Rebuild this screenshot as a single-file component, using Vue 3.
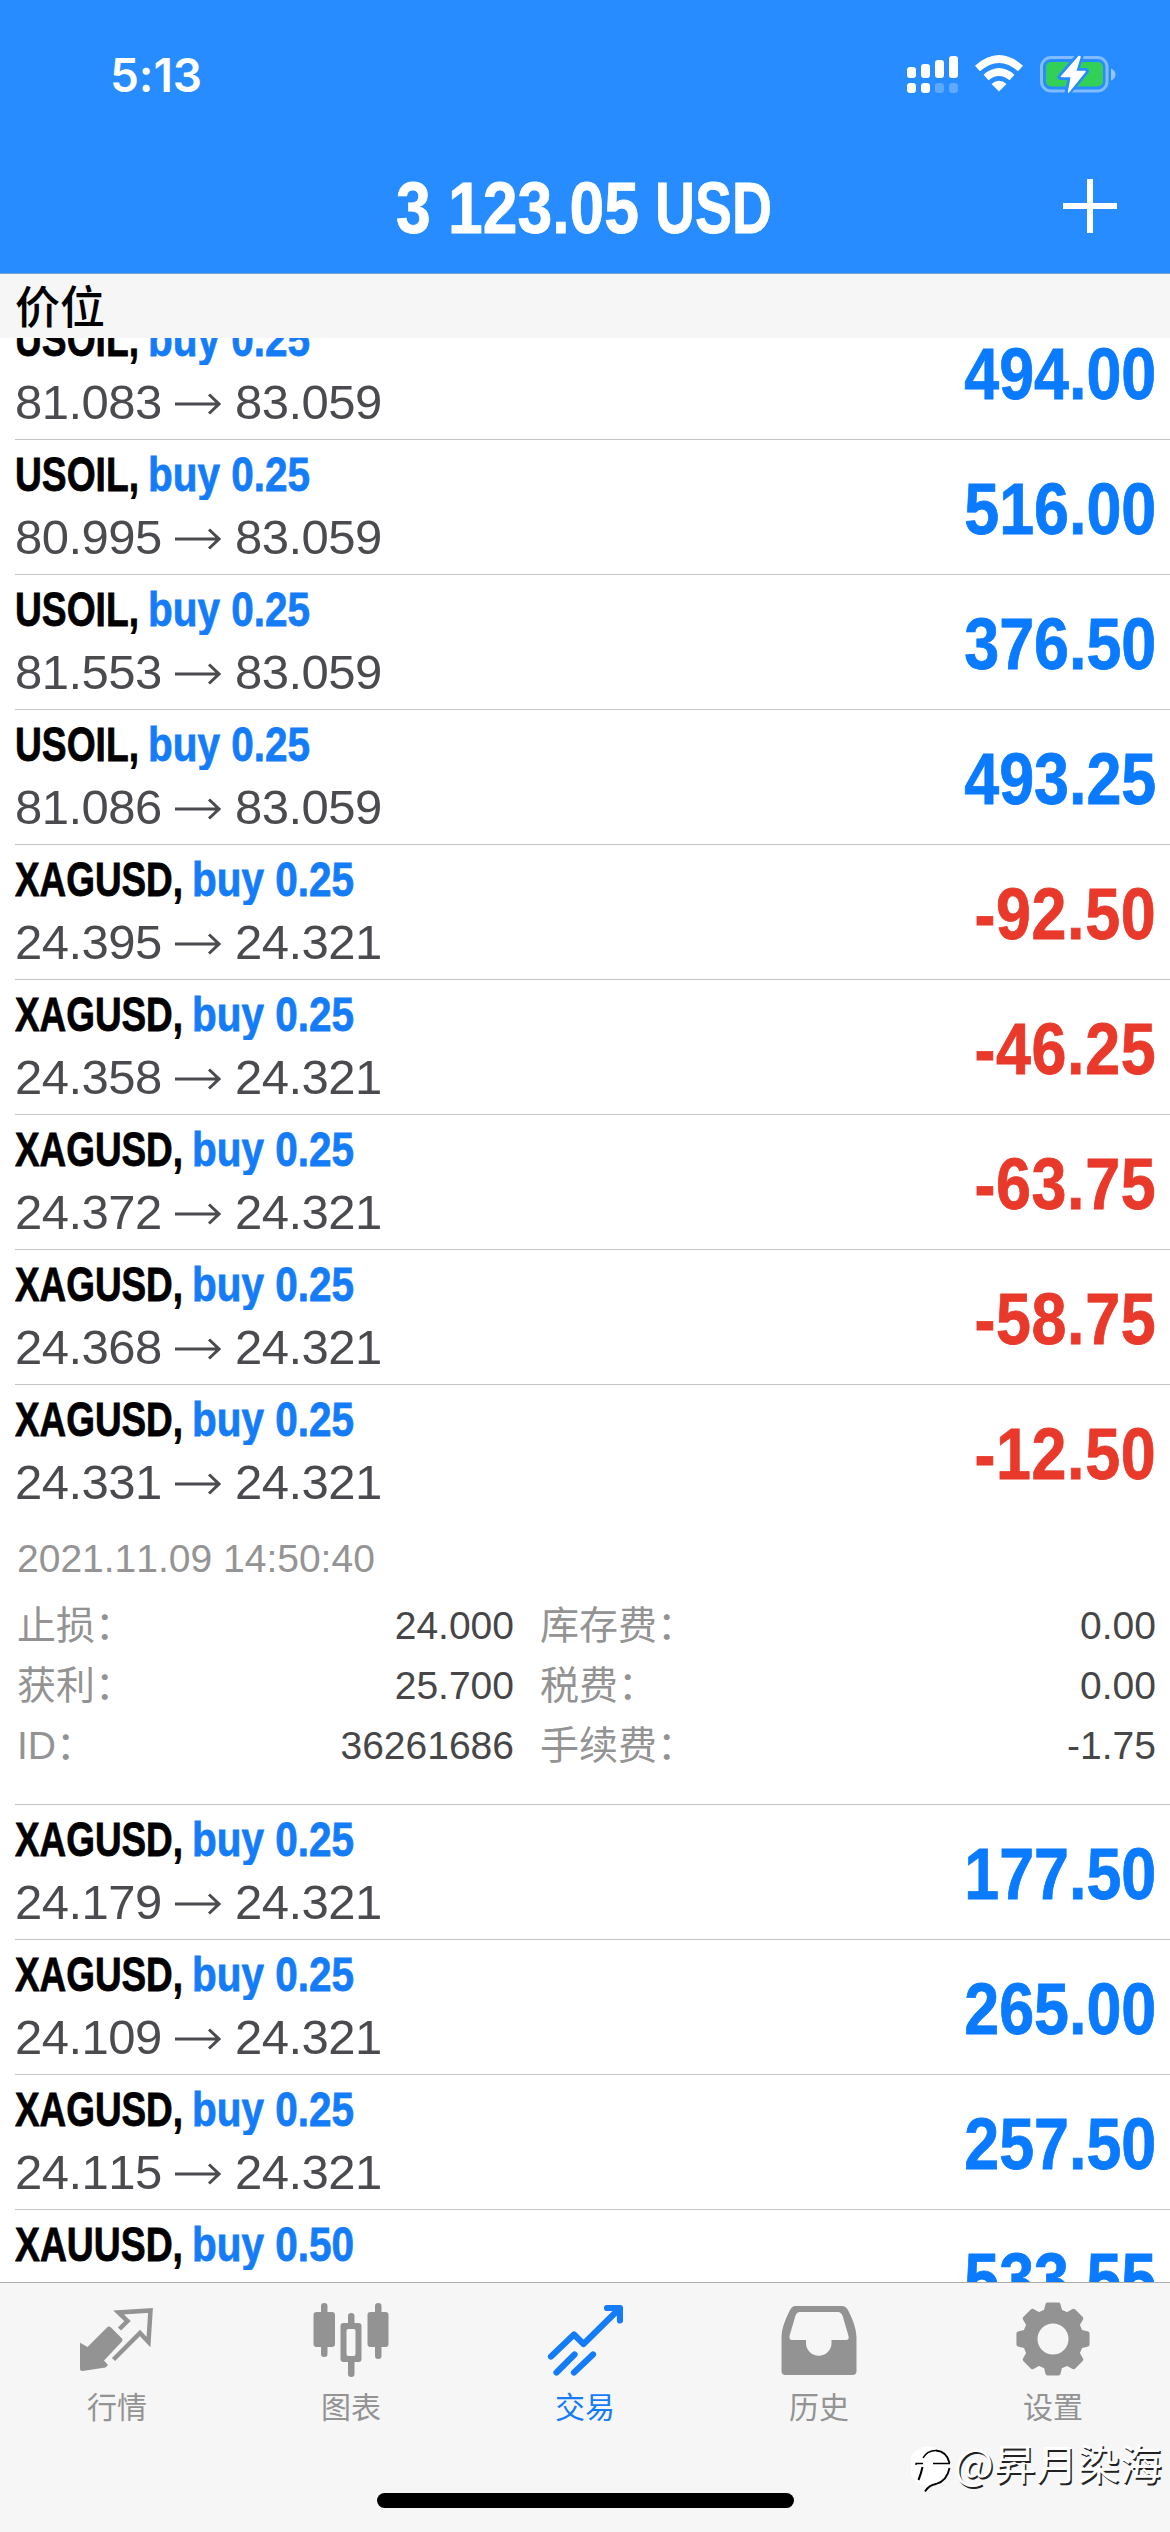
<script setup>
const rows = [
  { symbol: 'USOIL', lots: '0.25', from: '81.083', to: '83.059', profit: '494.00' },
  { symbol: 'USOIL', lots: '0.25', from: '80.995', to: '83.059', profit: '516.00' },
  { symbol: 'USOIL', lots: '0.25', from: '81.553', to: '83.059', profit: '376.50' },
  { symbol: 'USOIL', lots: '0.25', from: '81.086', to: '83.059', profit: '493.25' },
  { symbol: 'XAGUSD', lots: '0.25', from: '24.395', to: '24.321', profit: '-92.50' },
  { symbol: 'XAGUSD', lots: '0.25', from: '24.358', to: '24.321', profit: '-46.25' },
  { symbol: 'XAGUSD', lots: '0.25', from: '24.372', to: '24.321', profit: '-63.75' },
  { symbol: 'XAGUSD', lots: '0.25', from: '24.368', to: '24.321', profit: '-58.75' },
  { symbol: 'XAGUSD', lots: '0.25', from: '24.331', to: '24.321', profit: '-12.50', open: true },
  { symbol: 'XAGUSD', lots: '0.25', from: '24.179', to: '24.321', profit: '177.50' },
  { symbol: 'XAGUSD', lots: '0.25', from: '24.109', to: '24.321', profit: '265.00' },
  { symbol: 'XAGUSD', lots: '0.25', from: '24.115', to: '24.321', profit: '257.50' },
  { symbol: 'XAUUSD', lots: '0.50', profit: '533.55' },
]

const details = [
  ['止损：', '24.000', '库存费：', '0.00'],
  ['获利：', '25.700', '税费：', '0.00'],
  ['ID：', '36261686', '手续费：', '-1.75'],
]

// Condensed advance widths of the symbol labels, comma included
const symbolWidths = { USOIL: 124, XAGUSD: 168, XAUUSD: 168 }

const tabs = [
  { id: 'quotes', label: '行情' },
  { id: 'chart', label: '图表' },
  { id: 'trade', label: '交易', active: true },
  { id: 'history', label: '历史' },
  { id: 'settings', label: '设置' },
]

// Eight-toothed gear outline
const gear = (() => {
  const pts = []
  for (let i = 0; i < 8; i++) {
    const profile = [[-15, 28.5], [-9, 35], [9, 35], [15, 28.5]]
    for (const [deg, r] of profile) {
      const a = ((i * 45 + deg - 90) * Math.PI) / 180
      pts.push(`${(38 + r * Math.cos(a)).toFixed(2)} ${(38 + r * Math.sin(a)).toFixed(2)}`)
    }
  }
  return `M${pts.join('L')}ZM55.5 38a17.5 17.5 0 1 0-35 0a17.5 17.5 0 1 0 35 0Z`
})()
</script>

<template>
  <div class="screen">
    <header class="top">
      <div class="status">
        <span class="time">5:13</span>
        <svg class="status-icons" width="212" height="44" viewBox="904 52 212 44">
          <g fill="#fff">
            <rect x="907" y="67" width="9" height="11" rx="3" />
            <rect x="921" y="64" width="9" height="14" rx="3" />
            <rect x="935" y="60" width="9" height="18" rx="3" />
            <rect x="949" y="56" width="9" height="22" rx="3" />
            <rect x="907" y="83" width="9" height="10" rx="3" />
            <rect x="921" y="83" width="9" height="10" rx="3" />
            <rect x="935" y="83" width="9" height="10" rx="3" opacity=".25" />
            <rect x="949" y="83" width="9" height="10" rx="3" opacity=".25" />
            <path d="M999 91.500L991.500 84Q999 77.500 1006.500 84Z" />
          </g>
          <g fill="none" stroke="#fff" stroke-width="7.500">
            <path d="M977.500 68.500Q999 49.500 1020.500 68.500" />
            <path d="M986 77.500Q999 66.500 1012 77.500" />
          </g>
          <rect x="1041.500" y="57.500" width="65.500" height="33.500" rx="9.500" fill="none" stroke="#fff" stroke-opacity=".42" stroke-width="3" />
          <path d="M1111 68.500q4.500 2 4.500 6t-4.500 6z" fill="#fff" opacity=".5" />
          <rect x="1046" y="62" width="57" height="24.500" rx="5" fill="#33d058" />
          <path d="M1079 55.500L1060.500 77H1071L1067.500 93L1086 71H1075.500L1080.500 56.500Z" fill="#fff" stroke="#268cff" stroke-width="6" stroke-linejoin="round" />
          <path d="M1079 56.500L1061.500 76.500H1071.500L1068.500 92L1085 71.500H1075.500L1080 57Z" fill="#fff" stroke="#fff" stroke-width="1.500" stroke-linejoin="round" />
        </svg>
      </div>
      <div class="nav">
        <svg class="balance" width="400" height="90" viewBox="385 160 400 90">
          <text x="396" y="233" textLength="243" lengthAdjust="spacingAndGlyphs">3 123.05</text>
          <text x="655" y="233" textLength="117" lengthAdjust="spacingAndGlyphs">USD</text>
        </svg>
        <svg class="add" width="54" height="54" viewBox="0 0 54 54"><path d="M27 0V54M0 27H54" stroke="#fff" stroke-width="6" /></svg>
      </div>
    </header>

    <div class="section">价位</div>

    <main class="list">
      <div class="track">
        <div v-for="(row, i) in rows" :key="i" class="position">
          <div class="row">
            <div class="info">
              <svg class="name" width="400" height="60">
                <text x="0" y="50.500" :textLength="symbolWidths[row.symbol]" lengthAdjust="spacingAndGlyphs">{{ row.symbol }},</text>
                <text class="side" :x="symbolWidths[row.symbol] + 9" y="50.500" textLength="162" lengthAdjust="spacingAndGlyphs">buy {{ row.lots }}</text>
              </svg>
              <div v-if="row.from" class="prices">
                <span>{{ row.from }}</span>
                <svg class="arrow" width="46" height="22" viewBox="0 0 46 22"><path d="M0 11H44M34 1.500L44 11L34 20.500" fill="none" stroke="#4b4b4f" stroke-width="3" /></svg>
                <span>{{ row.to }}</span>
              </div>
            </div>
            <div class="profit" :class="{ loss: row.profit.startsWith('-') }">{{ row.profit }}</div>
          </div>
          <div v-if="row.open" class="details">
            <div class="date">2021.11.09 14:50:40</div>
            <div v-for="d in details" :key="d[0]" class="detail">
              <span class="label">{{ d[0] }}</span>
              <span class="val">{{ d[1] }}</span>
              <span class="label">{{ d[2] }}</span>
              <span class="val">{{ d[3] }}</span>
            </div>
          </div>
        </div>
      </div>
    </main>

    <footer class="tabbar">
      <div class="tabs">
        <div v-for="tab in tabs" :key="tab.id" class="tab" :class="{ active: tab.active }">
          <svg width="76" height="76" viewBox="0 0 76 76" fill="currentColor">
            <g v-if="tab.id === 'quotes'">
              <path d="M1.500 42L8.500 46L28 26.500Q30 24.500 32 26.500L42.500 37Q44.500 39 42.500 41L25 59.500L29 64L26.500 66.500L3.500 70Q1 70 1 67.500V41.500Z" />
              <path d="M40.500 28L48.500 20L39.500 11.500L71.500 9.500L69.500 41L61 32L34.500 58.500" fill="none" stroke="currentColor" stroke-width="4.500" />
            </g>
            <g v-else-if="tab.id === 'chart'">
              <rect x="8" y="2" width="6.500" height="54" rx="3.200" />
              <rect x="0.500" y="11" width="21.500" height="35" rx="3" />
              <rect x="62" y="2" width="6.500" height="56" rx="3.200" />
              <rect x="54.500" y="11" width="21" height="35" rx="3" />
              <rect x="35" y="12" width="6.500" height="64" rx="3.200" />
              <rect x="27.500" y="22" width="21" height="39" rx="3" />
              <rect x="33.500" y="28" width="9" height="27" rx="2" fill="#f6f6f6" />
            </g>
            <g v-else-if="tab.id === 'trade'" fill="none" stroke="currentColor" stroke-width="6.200" stroke-linecap="round" stroke-linejoin="round">
              <path d="M4 55.500L27 33.500L36.500 43L72 8M60 7H73V19.500" />
              <path d="M9.500 71.500L27.500 53.500M27 71.500L46 53.500" />
            </g>
            <g v-else-if="tab.id === 'history'">
              <path fill-rule="evenodd" d="M14 5H61Q65 5 67.500 10C72 19 75.500 28 75.500 37V70Q75.500 74 71.500 74H4.500Q.5 74 .5 70V37C.5 28 4 19 8.500 10Q11 5 14 5ZM18.500 11Q16 11 14.500 14.500L8.500 35Q8 39 11 39H25V42A12.500 12.500 0 0 0 50.500 42V39H65Q68.500 39 67.500 35L61.500 14.500Q60 11 57 11Z" />
            </g>
            <path v-else :d="gear" fill-rule="evenodd" stroke="currentColor" stroke-width="4" stroke-linejoin="round" />
          </svg>
          <span>{{ tab.label }}</span>
        </div>
      </div>
      <div class="home" />
    </footer>

    <div class="watermark">
      <svg width="42" height="54" viewBox="0 0 42 54">
        <path d="M19.500 6.500A19.500 19.500 0 0 1 38.500 26Q38 42 20 46L13 52L15 45.500A19.500 19.500 0 0 1 19.500 6.500Z" fill="#fff" />
        <g fill="none" stroke="#000">
          <path d="M12 18Q16 10.500 25 10.500" stroke-width="1.500" />
          <path d="M25 10.500Q36 11.500 38.500 23" stroke-width="1.800" />
          <path d="M5 25V23.500H12M22 23.500H39" stroke-width="1.300" />
          <path d="M11.500 27Q10 34 7.500 40" stroke-width="2" />
          <path d="M38.500 28Q36 41 25 44Q18 45 14 51.500" stroke-width="1.800" />
        </g>
      </svg>
      <span>@昇月染海</span>
    </div>
  </div>
</template>

<style>
body {
  margin: 0;
  background: #fff;
}
</style>

<style scoped>
.screen {
  position: relative;
  display: flex;
  flex-direction: column;
  width: 1170px;
  height: 2532px;
  overflow: hidden;
  background: #fff;
  font-family: "Liberation Sans", "Noto Sans CJK SC", sans-serif;
  font-kerning: none;
}
.top {
  flex: none;
  height: 273px;
  background: #268cff;
  color: #fff;
  border-bottom: 1px solid #7ba3cf;
}
.status {
  display: flex;
  justify-content: space-between;
  height: 132px;
  padding: 52px 54px 0 110px;
  box-sizing: border-box;
}
.time {
  font: 600 46px/46px Inter, sans-serif;
  letter-spacing: -0.1px;
}
.nav {
  display: flex;
  justify-content: space-between;
  padding: 28px 53px 0 385px;
}
.balance text {
  font-size: 73px;
  font-weight: 700;
  fill: #fff;
  stroke: #fff;
  stroke-width: 0.8px;
}
.add {
  margin-top: 19px;
}
.section {
  flex: none;
  height: 64px;
  line-height: 62px;
  padding-left: 15px;
  background: #f6f6f6;
  font-family: "Noto Sans CJK SC", sans-serif;
  font-size: 45px;
  font-weight: 500;
  color: #000;
}
.list {
  flex: 1;
  min-height: 0;
  overflow: hidden;
}
.track {
  margin-top: -33px;
}
.position {
  margin-left: 15px;
  border-bottom: 1px solid #c4c4c6;
}
.row {
  display: flex;
  justify-content: space-between;
  height: 134px;
  padding-right: 14px;
}
.name {
  display: block;
  font-size: 49px;
  font-weight: 700;
  fill: #000;
  stroke: #000;
  stroke-width: 0.8px;
}
.name .side {
  fill: #157cf8;
  stroke: #157cf8;
}
.prices {
  display: flex;
  align-items: center;
  height: 75px;
  font-size: 49px;
  line-height: 75px;
  letter-spacing: -0.5px;
  color: #4b4b4f;
}
.arrow {
  margin: 2px 14px 0 13px;
}
.profit {
  font-size: 73px;
  font-weight: 700;
  line-height: 137px;
  color: #0a7aff;
  -webkit-text-stroke: 0.8px #0a7aff;
  transform: scaleX(0.86);
  transform-origin: right;
}
.profit.loss {
  color: #e8392b;
  -webkit-text-stroke-color: #e8392b;
  letter-spacing: 0.7px;
  margin-right: -0.7px;
}
.details {
  height: 285px;
  padding-left: 2px;
}
.date {
  height: 76px;
  line-height: 79px;
  font-size: 39px;
  color: #949494;
}
.detail {
  display: grid;
  grid-template-columns: 200px 297px 200px 1fr;
  height: 60px;
  padding-right: 14px;
  line-height: 61px;
  font-size: 39px;
}
.detail .label {
  color: #939393;
  white-space: nowrap;
}
.detail .label:nth-child(3) {
  padding-left: 26px;
}
.detail .val {
  text-align: right;
  color: #464648;
}
.tabbar {
  flex: none;
  height: 250px;
  box-sizing: border-box;
  border-top: 1px solid #acacac;
  background: #f6f6f6;
}
.tabs {
  display: flex;
  height: 210px;
}
.tab {
  flex: 1;
  display: flex;
  flex-direction: column;
  align-items: center;
  padding-top: 18px;
  color: #939393;
}
.tab span {
  margin-top: 8px;
  font: 400 30px/40px "Noto Sans CJK SC", sans-serif;
}
.tab.active {
  color: #157cf8;
}
.home {
  width: 417px;
  height: 15px;
  margin: 0 auto;
  border-radius: 8px;
  background: #000;
}
.watermark {
  position: absolute;
  left: 911px;
  top: 2440px;
  display: flex;
  align-items: flex-start;
  gap: 1px;
  font: 400 42px/44px "Noto Sans CJK SC", sans-serif;
  color: #fff;
  text-shadow: 1.5px 1.5px 0 #222;
  white-space: nowrap;
}
</style>
